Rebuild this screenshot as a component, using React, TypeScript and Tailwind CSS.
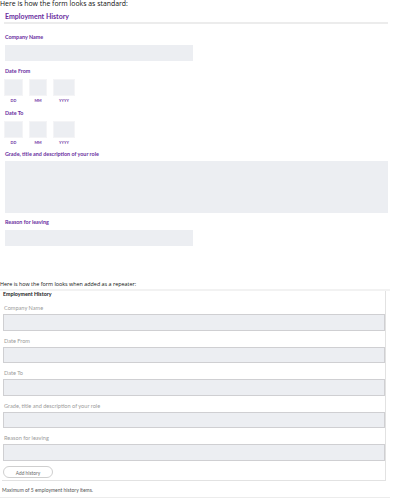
import React from 'react';

const purple = 'text-[#6a2ea0]';

function Label({ children }: { children: React.ReactNode }) {
  return (
    <div className={`h-[7px] flex items-center text-[5.4px] font-bold leading-none ${purple}`}>
      {children}
    </div>
  );
}

function DateRow() {
  return (
    <div className="flex gap-[6px] pl-[4px]">
      {[
        ['DD', 'w-[19px]'],
        ['MM', 'w-[18px]'],
        ['YYYY', 'w-[22px]'],
      ].map(([t, w]) => (
        <div key={t} className={`flex flex-col items-center ${w}`}>
          <div className="h-[17px] w-full bg-[#eceef2] border border-[#f4f4f6]" />
          <div className={`mt-[2px] h-[5px] flex items-center text-[3.8px] leading-none font-bold ${purple}`}>{t}</div>
        </div>
      ))}
    </div>
  );
}

function RepeaterField({ label }: { label: string }) {
  return (
    <div>
      <div className="h-[16px] flex items-end pb-[3px] pl-[1px] text-[5.6px] text-[#9b9b9b] leading-none">{label}</div>
      <div className="h-[16.5px] bg-[#eceef2] border border-[#cfcfd2]" />
    </div>
  );
}

export default function App() {
  return (
    <div className="w-[393px] h-[500px] bg-white overflow-hidden" style={{ fontFamily: 'Lato, "Open Sans", sans-serif' }}>
      <div className="h-[9px] flex items-center text-[6.9px] text-[#111] leading-none" style={{ fontFamily: '"Open Sans", sans-serif' }}>
        Here is how the form looks as standard:
      </div>
      <div className={`mt-[3px] ml-[5px] h-[8px] flex items-center text-[7px] font-bold leading-none ${purple}`}>
        Employment History
      </div>
      <div className="mt-[2px] ml-[4px] w-[384px] h-[2px] bg-[#ececec]" />

      <div className="pl-[5px]">
        <div className="mt-[10px]"><Label>Company Name</Label></div>
        <div className="mt-[4px] w-[188px] h-[16px] bg-[#eceef2]" />

        <div className="mt-[7px]"><Label>Date From</Label></div>
        <div className="mt-[4px] -ml-[5px]"><DateRow /></div>

        <div className="mt-[7px]"><Label>Date To</Label></div>
        <div className="mt-[4px] -ml-[5px]"><DateRow /></div>

        <div className="mt-[6px]"><Label>Grade, title and description of your role</Label></div>
        <div className="mt-[3px] w-[383px] h-[52px] bg-[#eceef2]" />

        <div className="mt-[6px]"><Label>Reason for leaving</Label></div>
        <div className="mt-[4px] w-[188px] h-[16px] bg-[#eceef2]" />
      </div>

      <div className="mt-[35px] h-[8px] flex items-center text-[5.4px] text-[#111] leading-none" style={{ fontFamily: '"Open Sans", sans-serif' }}>
        Here is how the form looks when added as a repeater:
      </div>
      <div className="w-[390px] h-[2px] bg-[#f2f2f2]" />
      <div className="ml-[2px] w-[384px] border-r border-b border-[#e2e2e2] pb-[2px]">
        <div className="h-[7px] flex items-center pl-[1px] text-[5.3px] font-bold text-[#222] leading-none">Employment History</div>
        <div className="pl-[1px]">
          <RepeaterField label="Company Name" />
          <RepeaterField label="Date From" />
          <RepeaterField label="Date To" />
          <RepeaterField label="Grade, title and description of your role" />
          <RepeaterField label="Reason for leaving" />
          <div className="mt-[5px] w-[50px] h-[12px] rounded-full border border-[#cfcfcf] flex items-end justify-center pb-[1px] text-[4.8px] text-[#666] leading-none">
            Add history
          </div>
        </div>
      </div>
      <div className="mt-[7px] pl-[2px] h-[5px] flex items-center text-[5px] text-[#555] leading-none">
        Maximum of 5 employment history items.
      </div>
      <div className="mt-[4px] w-[390px] h-[1px] bg-[#ececec]" />
    </div>
  );
}
